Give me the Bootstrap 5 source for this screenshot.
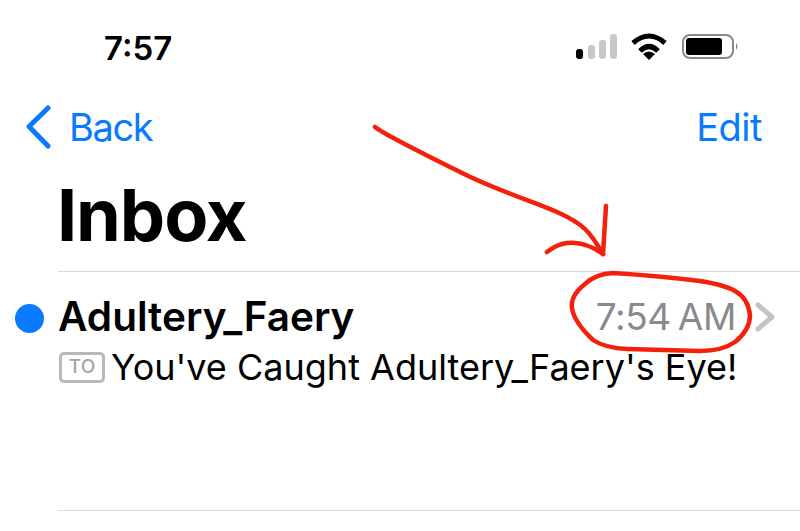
<!DOCTYPE html>
<html lang="en">
<head>
    <meta charset="UTF-8">
    <meta name="viewport" content="width=device-width, initial-scale=1.0">
    <title>Inbox</title>
    <link href="https://cdn.jsdelivr.net/npm/bootstrap@5.3.0/dist/css/bootstrap.min.css" rel="stylesheet">
    <style>
        html, body {
            height: 100%;
        }
        body {
            background-color: #fff;
            font-family: "Inter", "Liberation Sans", sans-serif;
            color: #000;
            overflow: hidden;
        }
        .phone-screen {
            position: relative;
            width: 800px;
            height: 531px;
        }
        .status-row {
            height: 96px;
            padding: 26px 60px 0 104px;
        }
        .status-time {
            font-size: 33px;
            font-weight: 600;
            line-height: 44px;
        }
        .nav-row {
            height: 62px;
            padding: 0 38px 0 24px;
            color: #0a7aff;
            font-size: 38px;
            line-height: 62px;
            letter-spacing: -0.5px;
        }
        .back-label {
            letter-spacing: -1.4px;
            margin-left: -1px;
        }
        .inbox-title {
            font-size: 72px;
            font-weight: 700;
            line-height: 113px;
            letter-spacing: -1.1px;
            margin: 0 0 0 57px;
            height: 113px;
        }
        .mail-list {
            margin-left: 58px;
            border-top: 1px solid #d9d9d9;
            border-bottom: 1px solid #d9d9d9;
            height: 240px;
        }
        .mail-row {
            position: relative;
            padding: 20px 25px 0 0;
        }
        .unread-dot {
            position: absolute;
            left: -43px;
            top: 32px;
            width: 29px;
            height: 29px;
            border-radius: 50%;
            background: #0a7aff;
        }
        .mail-sender {
            font-size: 40.5px;
            font-weight: 600;
            line-height: 50px;
        }
        .mail-time {
            color: #8a8a8e;
            font-size: 37px;
            line-height: 50px;
            letter-spacing: -0.4px;
            word-spacing: -3px;
            padding-right: 3px;
        }
        .mail-subject {
            font-size: 36px;
            line-height: 50px;
        }
        .to-tag {
            display: inline-flex;
            align-items: center;
            justify-content: center;
            width: 46px;
            height: 31px;
            margin: 0 6px 0 1px;
            border: 3px solid #b8b8b8;
            border-radius: 5px;
            color: #a5a5a5;
            font-size: 19px;
            font-weight: 500;
        }
        .scribble {
            position: absolute;
            inset: 0;
            pointer-events: none;
        }
    </style>
</head>
<body>

    <div class="phone-screen">
        <div class="status-row d-flex justify-content-between align-items-start">
            <span class="status-time">7:57</span>
            <svg width="170" height="34" viewBox="0 0 170 34" class="mt-1">
                <rect x="6" y="19" width="7" height="10" rx="3" fill="#000"/>
                <rect x="18" y="15" width="7" height="14" rx="3" fill="#c8c8c8"/>
                <rect x="29" y="10" width="7" height="19" rx="3" fill="#c8c8c8"/>
                <rect x="40" y="4" width="7" height="25" rx="3" fill="#c8c8c8"/>
                <path d="M63 13 Q79 -1 95 13" fill="none" stroke="#000" stroke-width="5"/>
                <path d="M70 21 Q79 12 88 21" fill="none" stroke="#000" stroke-width="5"/>
                <path d="M73 24 Q79 19 85 24 L79 30 Z" fill="#000"/>
                <rect x="113" y="5" width="50" height="23" rx="7" fill="none" stroke="#8a8a8a" stroke-width="2"/>
                <rect x="116" y="8" width="36" height="17" rx="3" fill="#000"/>
                <path d="M166 13 Q169 16.500 166 20 Z" fill="#8a8a8a"/>
            </svg>
        </div>

        <div class="nav-row d-flex justify-content-between align-items-center">
            <span class="d-flex align-items-center gap-3">
                <svg width="30" height="44" viewBox="0 0 30 44">
                    <path d="M24 3 L5 21.500 L24 41" fill="none" stroke="#0a7aff" stroke-width="5" stroke-linecap="round" stroke-linejoin="round"/>
                </svg>
                <span class="back-label">Back</span>
            </span>
            <span>Edit</span>
        </div>

        <h1 class="inbox-title">Inbox</h1>

        <div class="mail-list">
            <div class="mail-row">
                <span class="unread-dot"></span>
                <div class="d-flex justify-content-between align-items-center">
                    <span class="mail-sender">Adultery_Faery</span>
                    <span class="d-flex align-items-center gap-3">
                        <span class="mail-time">7:54 AM</span>
                        <svg width="20" height="30" viewBox="0 0 20 30">
                            <path d="M3 3 L17 15 L3 27" fill="none" stroke="#c4c4c6" stroke-width="5" stroke-linecap="round" stroke-linejoin="round"/>
                        </svg>
                    </span>
                </div>
                <div class="mail-subject d-flex align-items-center">
                    <span class="to-tag">TO</span>
                    <span>You've Caught Adultery_Faery's Eye!</span>
                </div>
            </div>
        </div>

        <svg class="scribble" width="800" height="531" viewBox="0 0 800 531">
            <g fill="none" stroke="#f5200c" stroke-width="4.500" stroke-linecap="round" stroke-linejoin="round">
                <path d="M375 127 C385 135 420 152 460 172 S530 200 557 212 S590 232 603 254"/>
                <path d="M606 206 L603 254"/>
                <path d="M547 252 Q557 244 567 243 Q585 241 603 254"/>
                <path d="M613 273 Q595 274 585 284 Q570 296 572 308 Q574 322 593 340 Q605 348 627 349 L700 351 Q722 351 735 342 Q750 330 750 315 Q748 298 735 291 Q725 285 700 281 Q660 276 613 273 Z"/>
            </g>
        </svg>
    </div>

    <script src="https://cdn.jsdelivr.net/npm/bootstrap@5.3.0/dist/js/bootstrap.bundle.min.js"></script>
</body>
</html>
